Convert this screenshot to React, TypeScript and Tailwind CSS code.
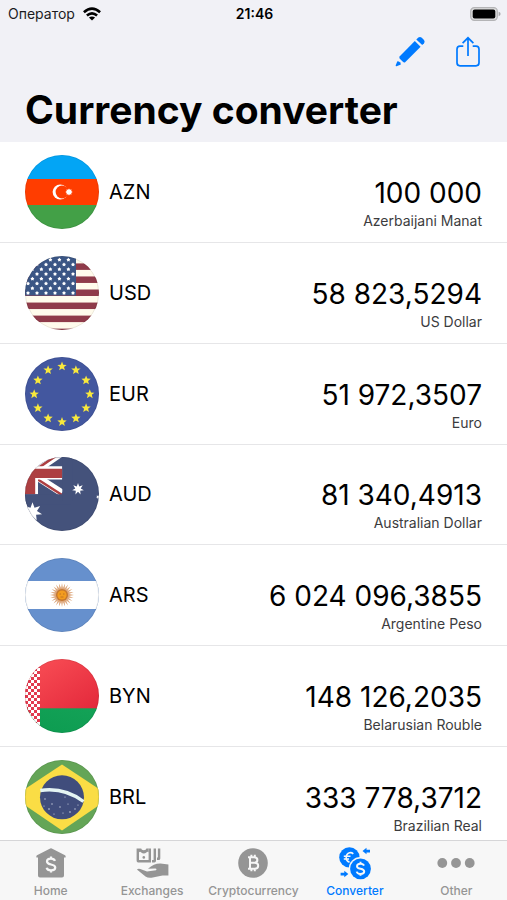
import type { ReactNode } from "react";

/** Points of a star polygon centred on (cx, cy). */
function starPoints(cx: number, cy: number, outer: number, inner: number, tips: number) {
  return Array.from({ length: tips * 2 }, (_, i) => {
    const r = i % 2 === 0 ? outer : inner;
    const a = (Math.PI * i) / tips - Math.PI / 2;
    return `${(cx + r * Math.cos(a)).toFixed(2)},${(cy + r * Math.sin(a)).toFixed(2)}`;
  }).join(" ");
}

function Flag({ id, children }: { id: string; children: ReactNode }) {
  return (
    <svg viewBox="0 0 74 74" className="size-[74px] shrink-0" aria-hidden="true">
      <defs>
        <clipPath id={`flag-${id}`}>
          <circle cx="37" cy="37" r="37" />
        </clipPath>
      </defs>
      <g clipPath={`url(#flag-${id})`}>{children}</g>
      <circle cx="37" cy="37" r="36.6" fill="none" stroke="#000" strokeOpacity="0.1" strokeWidth="0.8" />
    </svg>
  );
}

const azerbaijan = (
  <Flag id="azn">
    <rect width="74" height="25" fill="#03a5f5" />
    <rect y="24" width="74" height="26" fill="#ff3d00" />
    <rect y="50" width="74" height="24" fill="#43a047" />
    <circle cx="35.2" cy="37" r="7.6" fill="#fff" />
    <circle cx="37" cy="37" r="6.4" fill="#ff3d00" />
    <polygon points={starPoints(44, 37, 3.6, 2.4, 8)} fill="#fff" />
  </Flag>
);

const usa = (
  <Flag id="usd">
    <rect width="74" height="74" fill="#fffbec" />
    {[0, 1, 2, 3, 4, 5].map((k) => (
      <rect key={k} y={7.4 + 13.05 * k} width="74" height="6.5" fill="#8f3b4a" />
    ))}
    <rect width="51" height="39.5" fill="#3b5685" />
    {Array.from({ length: 8 }, (_, row) =>
      Array.from({ length: 6 }, (_, col) => (
        <polygon
          key={`${row}-${col}`}
          points={starPoints((row % 2 === 0 ? -1.6 : 3) + 9 * col, 3.8 + 4.75 * row, 2, 1.3, 5)}
          fill="#fff"
        />
      )),
    )}
  </Flag>
);

const europe = (
  <Flag id="eur">
    <rect width="74" height="74" fill="#43579f" />
    {Array.from({ length: 12 }, (_, i) => {
      const a = (Math.PI * i) / 6;
      return (
        <polygon
          key={i}
          points={starPoints(37 + 27.8 * Math.sin(a), 37.2 - 27.8 * Math.cos(a), 4.9, 2.1, 5)}
          fill="#f8e83c"
        />
      );
    })}
  </Flag>
);

const australia = (
  <Flag id="aud">
    <rect width="74" height="74" fill="#44527b" />
    <path d="M6 17L38 -5M9 18L37 36" stroke="#fff" strokeWidth="7" />
    <path d="M6 16L38 -6M9 20L37 38" stroke="#ad3f42" strokeWidth="2.6" />
    <path d="M0 9.3H37.3V22.5H13V37.3H0Z" fill="#fff" />
    <path d="M0 11.8H37.3V21H10.2V37.3H0Z" fill="#ad3f42" />
    <rect y="37.3" width="46" height="10" fill="#44527b" />
    <rect x="37.3" width="10" height="44" fill="#44527b" />
    <polygon points={starPoints(53, 32, 6, 2.8, 7)} fill="#fff" />
    <polygon points={starPoints(7.5, 55, 9.8, 4.6, 7)} fill="#fff" />
    <polygon points={starPoints(73, 40, 2, 1, 7)} fill="#fff" />
  </Flag>
);

const argentina = (
  <Flag id="ars">
    <rect width="74" height="74" fill="#6690cd" />
    <rect y="23" width="74" height="28" fill="#fff" />
    <polygon points={starPoints(37, 37, 12, 7, 24)} fill="#dda77c" />
    <circle cx="37" cy="37" r="6" fill="#c4772f" />
    <circle cx="37" cy="37" r="4.6" fill="#f39c1f" />
    <path d="M34.5 36H36M38 36H39.5M35.5 39H38.5" stroke="#b56a24" strokeWidth="0.8" />
  </Flag>
);

const belarus = (
  <Flag id="byn">
    <defs>
      <linearGradient id="byn-red" x1="0" y1="0" x2="1" y2="1">
        <stop offset="0" stopColor="#fb5157" />
        <stop offset="1" stopColor="#e3283b" />
      </linearGradient>
      <linearGradient id="byn-green" x1="0" y1="1" x2="1" y2="0">
        <stop offset="0" stopColor="#0c9b50" />
        <stop offset="1" stopColor="#14a257" />
      </linearGradient>
      <pattern id="byn-check" width="6" height="6" patternUnits="userSpaceOnUse">
        <rect width="6" height="6" fill="#fff" />
        <rect width="3" height="3" fill="#e23a4f" />
        <rect x="3" y="3" width="3" height="3" fill="#e23a4f" />
      </pattern>
    </defs>
    <rect width="74" height="50" fill="url(#byn-red)" />
    <rect y="49.3" width="74" height="25" fill="url(#byn-green)" />
    <rect width="15" height="74" fill="url(#byn-check)" />
  </Flag>
);

const brazil = (
  <Flag id="brl">
    <rect width="74" height="74" fill="#64a557" />
    <path d="M37 4.5L86 37L37 70.5L-12 37Z" fill="#fadd45" />
    <circle cx="37" cy="37.3" r="22" fill="#404d7c" />
    <path d="M15.3 30.5Q39 27 58.5 41.5" fill="none" stroke="#e4f4f3" strokeWidth="3.4" />
    <g fill="#cfd5e4">
      <circle cx="20" cy="39" r="0.7" />
      <circle cx="19" cy="46" r="0.6" />
      <circle cx="24" cy="49" r="0.8" />
      <circle cx="27" cy="44" r="0.7" />
      <circle cx="29" cy="54" r="0.6" />
      <circle cx="35" cy="47" r="0.7" />
      <circle cx="38" cy="53" r="0.6" />
      <circle cx="43" cy="44" r="0.6" />
      <circle cx="45" cy="52" r="0.8" />
      <circle cx="50" cy="49" r="0.7" />
      <circle cx="53" cy="45" r="0.6" />
      <circle cx="40" cy="37" r="0.6" />
    </g>
  </Flag>
);

const currencies = [
  { code: "AZN", name: "Azerbaijani Manat", amount: "100 000", flag: azerbaijan },
  { code: "USD", name: "US Dollar", amount: "58 823,5294", flag: usa },
  { code: "EUR", name: "Euro", amount: "51 972,3507", flag: europe },
  { code: "AUD", name: "Australian Dollar", amount: "81 340,4913", flag: australia },
  { code: "ARS", name: "Argentine Peso", amount: "6 024 096,3855", flag: argentina },
  { code: "BYN", name: "Belarusian Rouble", amount: "148 126,2035", flag: belarus },
  { code: "BRL", name: "Brazilian Real", amount: "333 778,3712", flag: brazil },
];

function Dollar({ x, y, size, color }: { x: number; y: number; size: number; color: string }) {
  return (
    <g transform={`translate(${x} ${y}) scale(${size / 20})`} fill="none" stroke={color} strokeWidth="2.8">
      <path d="M5 -4.5C4.2 -6.6 2.3 -7.3 0 -7.3C-3 -7.3 -5 -5.9 -5 -3.7C-5 -1.2 -2.6 -0.6 0 0C2.8 0.6 5.3 1.3 5.3 3.8C5.3 6.1 3 7.3 0 7.3C-2.8 7.3 -4.9 6.2 -5.4 4M0 -10V-7M0 7V10" />
    </g>
  );
}

const homeIcon = (
  <svg viewBox="0 0 30 30" className="size-[30px]" aria-hidden="true">
    <path
      d="M14.2 0.4Q15 0 15.8 0.4L29 7.2Q30 7.8 29.6 9.4H28V27.5Q28 29.6 26 29.6H4Q2 29.6 2 27.5V9.4H0.4Q0 7.8 1 7.2Z"
      fill="currentColor"
    />
    <Dollar x={15} y={16.5} size={16} color="#f7f7f7" />
  </svg>
);

const exchangeIcon = (
  <svg viewBox="0 0 33 30" className="h-[30px] w-[33px]" aria-hidden="true">
    <path d="M0.6 0.4H3V12H12.6V0.4H15V14.4H2.2Q0.6 14.4 0.6 12.8Z" fill="currentColor" />
    <path d="M16 14.4V12H17.6V0.4H20V12.8Q20 14.4 18.4 14.4Z" fill="currentColor" />
    <path d="M21 12V9.6H21.9V0.4H24.3V10.4Q24.3 12 22.7 12Z" fill="currentColor" />
    <path d="M3 0.4H5.2Q5.3 2.2 7.8 2.2Q10.3 2.2 10.4 0.4H12.6V4.2Q11.2 3.2 10.4 4.6Q7.8 6.4 5.2 4.6Q4.4 3.2 3 4.2Z" fill="currentColor" />
    <circle cx="7.8" cy="9.4" r="1.3" fill="currentColor" />
    <path
      d="M0.9 21.4Q2.5 20.2 4.3 21L11 23.6L20 22.2Q21.2 20.7 19.3 20.5L12 20.7Q18 15.2 24.5 15.4L32.4 16.4V27.6H26.5L15.5 29.7Q12 30.2 9.5 28.5Z"
      fill="currentColor"
    />
  </svg>
);

const cryptoIcon = (
  <svg viewBox="0 0 30 30" className="size-[30px]" aria-hidden="true">
    <circle cx="15" cy="15" r="14.8" fill="currentColor" />
    <path
      d="M10 9.3H16Q19.4 9.3 19.4 12Q19.4 14.8 16 14.8H12H16.6Q20.2 14.8 20.2 17.8Q20.2 20.8 16.6 20.8H10M12 9.3V20.8M13.4 6.8V9.3M16.8 6.8V9.3M13.4 20.8V23.3M16.8 20.8V23.3"
      fill="none"
      stroke="#f7f7f7"
      strokeWidth="2"
    />
  </svg>
);

const converterIcon = (
  <svg viewBox="0 0 32 33" className="h-[33px] w-8" aria-hidden="true">
    <circle cx="10.4" cy="10.4" r="10.2" fill="currentColor" />
    <path
      d="M14.3 6.8Q12.6 5.3 10.6 5.8Q7.2 6.8 7.2 10.5Q7.2 14.4 10.5 15.1M4.8 9.2H11.5M4.8 12H10"
      fill="none"
      stroke="#f7f7f7"
      strokeWidth="1.6"
    />
    <circle cx="21.5" cy="21.8" r="11.8" fill="#f7f7f7" />
    <circle cx="21.5" cy="21.8" r="10.4" fill="currentColor" />
    <Dollar x={21.5} y={21.8} size={14} color="#f7f7f7" />
    <path d="M23.5 4L27.5 0.8V2.8H31V5.4H27.5V7.2Z" fill="currentColor" />
    <path d="M9.3 27L5.3 23.8V25.8H1.6V28.4H5.3V30.2Z" fill="currentColor" />
  </svg>
);

const otherIcon = (
  <svg viewBox="0 0 38 10" className="h-2.5 w-[38px]" aria-hidden="true">
    <circle cx="5.3" cy="5" r="4.9" fill="currentColor" />
    <circle cx="19" cy="5" r="4.9" fill="currentColor" />
    <circle cx="32.7" cy="5" r="4.9" fill="currentColor" />
  </svg>
);

const tabs = [
  { label: "Home", icon: homeIcon },
  { label: "Exchanges", icon: exchangeIcon },
  { label: "Cryptocurrency", icon: cryptoIcon },
  { label: "Converter", icon: converterIcon, active: true },
  { label: "Other", icon: otherIcon },
];

function StatusBar() {
  return (
    <div className="grid h-7 grid-cols-3 items-center pr-1.5 pl-2 text-sm text-[#1c1c1e]">
      <div className="flex items-center gap-2">
        <span>Оператор</span>
        <svg viewBox="0 0 18 14" className="h-3.5 w-[18px]" aria-hidden="true">
          <g fill="none" stroke="#000" strokeWidth="2.6">
            <path d="M0.9 5.2Q9 -2 17.1 5.2" />
            <path d="M3.9 8.6Q9 4.2 14.1 8.6" />
          </g>
          <path d="M9 13.6L5.9 10.6Q9 8.2 12.1 10.6Z" />
        </svg>
      </div>
      <span className="text-center font-semibold text-black">21:46</span>
      <svg viewBox="0 0 31 14" className="h-3.5 w-[31px] justify-self-end" aria-hidden="true">
        <rect x="0.7" y="0.7" width="26.6" height="12.6" rx="3.6" fill="#dcdcdc" stroke="#b4b4b6" strokeWidth="1.2" />
        <rect x="2.7" y="2.4" width="22.6" height="9.2" rx="2" />
        <path d="M28.6 4.8Q30.6 5.4 30.6 7Q30.6 8.6 28.6 9.2Z" fill="#a9a9ab" />
      </svg>
    </div>
  );
}

export default function App() {
  return (
    <div className="flex h-screen flex-col bg-white font-[Inter,'Liberation_Sans',sans-serif] text-black">
      <header className="shrink-0 bg-[#f1f1f6]">
        <StatusBar />
        <div className="flex h-12 items-center justify-end gap-[29px] px-[26px] text-[#007aff]">
          <button type="button" aria-label="Edit">
            <svg viewBox="0 0 32 32" className="size-8" fill="currentColor" aria-hidden="true">
              <path d="M22.3 3.5L24.3 1.6Q26 0.3 27.8 1.7L30 3.9Q31.3 5.6 30 7.2L28.2 9.1Z" />
              <path d="M20.8 5.1L26.6 10.7L11.4 25.9Q10.2 27 8.9 25.8L5.8 22.8Q4.8 21.6 5.8 20.2Z" />
              <path d="M3.4 25.2Q4.9 25.3 5.9 26.3Q6.9 27.4 6.9 28.6L2.6 30.3Q1.5 30.5 1.7 29.3Z" />
            </svg>
          </button>
          <button type="button" aria-label="Share">
            <svg viewBox="0 0 26 32" className="h-8 w-[26px]" fill="none" stroke="currentColor" strokeWidth="1.7" aria-hidden="true">
              <path d="M8.3 10.2H5Q2 10.2 2 13.2V26.8Q2 29.8 5 29.8H21Q24 29.8 24 26.8V13.2Q24 10.2 21 10.2H17.7" />
              <path d="M13 20V2M7.6 7.2L13 1.8L18.4 7.2" />
            </svg>
          </button>
        </div>
        <h1 className="px-[25px] pt-1 pb-0.5 text-[39px] leading-[60px] font-bold">Currency converter</h1>
      </header>

      <main className="min-h-0 flex-1 overflow-y-auto [scrollbar-width:none]">
        <ul className="grid h-[706px] auto-rows-fr">
          {currencies.map((c) => (
            <li key={c.code} className="flex items-center gap-2.5 border-b border-[#e6e6e8] px-[25px]">
              {c.flag}
              <span className="text-xl">{c.code}</span>
              <div className="ml-auto flex flex-col self-end pb-[11px] text-right">
                <span className="text-[28px] leading-9">{c.amount}</span>
                <span className="text-sm leading-5 text-[#3c3c3e]">{c.name}</span>
              </div>
            </li>
          ))}
        </ul>
      </main>

      <nav className="grid h-[60px] shrink-0 grid-cols-5 border-t border-[#d6d6d8] bg-[#f7f7f7]">
        {tabs.map((t) => (
          <button
            key={t.label}
            type="button"
            aria-current={t.active ? "page" : undefined}
            className={`flex flex-col items-center ${t.active ? "text-[#007aff]" : "text-[#959595]"}`}
          >
            <span className="flex h-11 items-center">{t.icon}</span>
            <span className="text-xs leading-3 font-medium">{t.label}</span>
          </button>
        ))}
      </nav>
    </div>
  );
}
